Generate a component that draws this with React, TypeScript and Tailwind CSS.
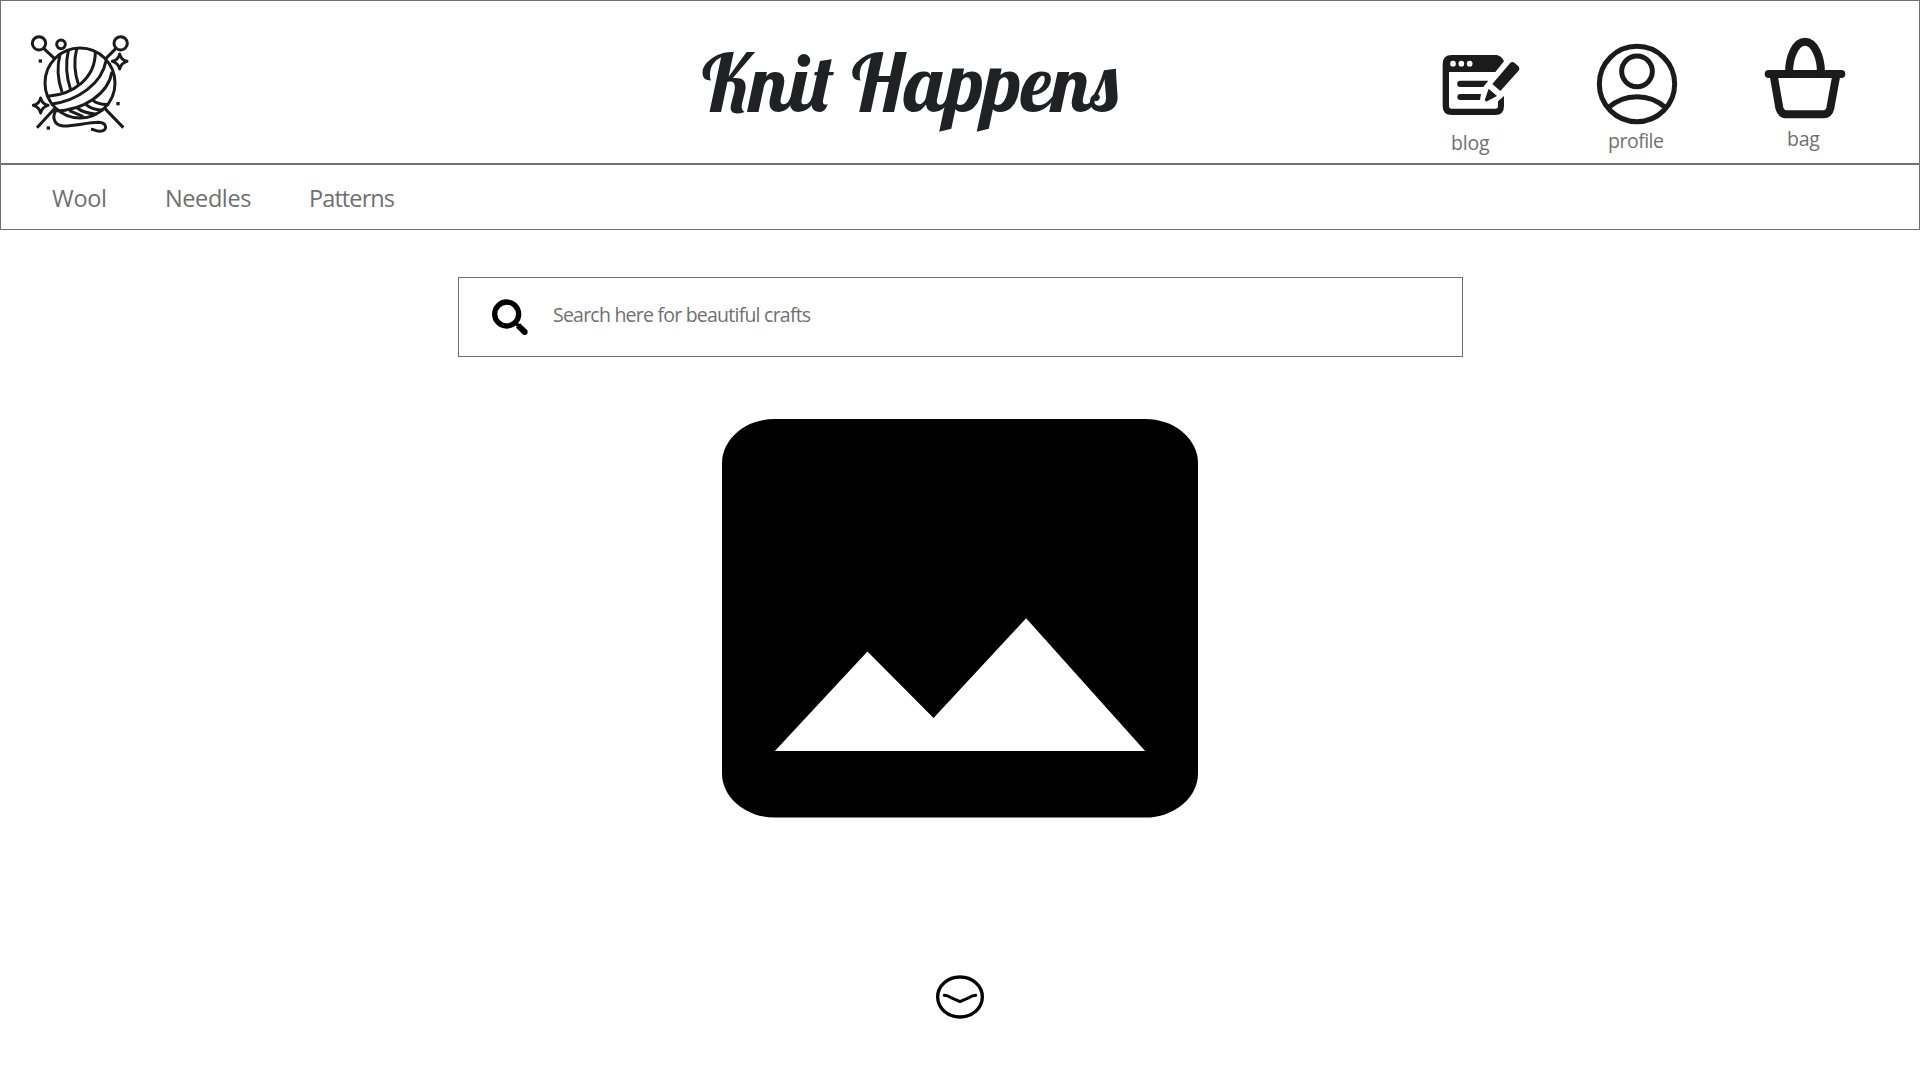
function YarnLogo() {
  return (
    <svg viewBox="0 0 360 345" className="mt-[24px] ml-[19px] h-[115px] w-[120px] shrink-0" fill="none" stroke="#1b1b1b" strokeWidth="9" strokeLinecap="butt" strokeLinejoin="round">
      <g transform="translate(0 1)">
        <circle cx="180" cy="173" r="105" />
        <circle cx="57" cy="54" r="20" />
        <circle cx="302" cy="54" r="20" />
        <circle cx="123" cy="57" r="13" />
        <path d="M71 69L103 99M288 69L255 102M106 247L51 307M252 247L310 307" />
        <path d="M120 87C110 125 114 165 126 200M145 76C136 115 139 155 152 193M170 71C160 110 164 145 176 180" />
        <path d="M84 213C160 206 226 160 226 80M92 237C175 226 246 174 258 106M107 256C190 256 265 205 276 139" />
        <path d="M112 250C95 268 98 300 130 302C160 303 200 292 235 291C262 292 264 317 240 318C230 318 224 313 213 312" />
        <path d="M148 256L190 274M172 248C188 262 210 265 230 267M198 238C214 252 232 254 250 255M219 225C232 236 252 238 268 237" />
        <path d="M299 86Q303 104 321 108Q303 113 299 131Q295 113 277 108Q295 104 299 86ZM62 218Q66 236 84 240Q66 245 62 263Q58 245 40 240Q58 236 62 218Z" />
      </g>
      <g fill="#1b1b1b" stroke="none">
        <rect x="56" y="103" width="10" height="10" />
        <rect x="289" y="231" width="10" height="10" />
        <rect x="80" y="304" width="10" height="10" />
      </g>
    </svg>
  );
}

function BlogIcon() {
  return (
    <svg viewBox="60 60 246 204" className="h-[68px] w-[82px]">
      <path fill="#1b1b1b" d="M95 75H226C238 75 248 83 252 94L226 126H87V228Q87 236 95 236H226Q234 236 234 228V214L252 198V228Q252 255 226 255H95Q68 255 68 228V102Q68 75 95 75Z" />
      <g fill="#fff">
        <circle cx="99" cy="101" r="8.500" />
        <circle cx="124" cy="101" r="8.500" />
        <circle cx="149" cy="101" r="8.500" />
      </g>
      <g fill="#1b1b1b">
        <path d="M121 152H205L190 171H121A9.500 9.500 0 0 1 121 152ZM121 192H183L180 210H121A9 9 0 0 1 121 192Z" />
        <path d="M270 100Q277 93 284 99L295 109Q301 116 295 123L241 183L217 162Z" />
        <path d="M206 176L231 198L201 214Q194 216 195 208Z" />
      </g>
    </svg>
  );
}

function ProfileIcon() {
  return (
    <svg viewBox="525 36 252 252" className="size-[84px]" fill="none" stroke="#1b1b1b" strokeWidth="15">
      <circle cx="651" cy="162" r="113" />
      <circle cx="651" cy="124" r="46" />
      <path d="M565 233C614 189 688 189 737 233" />
    </svg>
  );
}

function BagIcon() {
  return (
    <svg viewBox="219 48 252 252" className="size-[84px]" fill="none" stroke="#1b1b1b" strokeWidth="24" strokeLinecap="round">
      <path d="M236 162H454" />
      <path d="M297 158C297 112 316 65 345 65S393 112 393 158" />
      <path strokeLinecap="butt" d="M251 166L268 264Q273 283 291 283H400Q417 283 421 264L439 166" />
    </svg>
  );
}

function SearchIcon() {
  return (
    <svg viewBox="120 80 120 120" className="mt-[19px] ml-[31px] size-[40px] shrink-0" fill="none" stroke="#000">
      <circle cx="170" cy="131" r="36" strokeWidth="16" />
      <path d="M196 157L206 167" strokeWidth="10" />
      <path d="M204 165L223 184" strokeWidth="18" />
      <circle cx="224" cy="185" r="9" fill="#000" stroke="none" />
    </svg>
  );
}

function PhotoIcon() {
  return (
    <svg viewBox="3 3 18 18" preserveAspectRatio="none" className="mx-auto mt-[62px] h-[398.5px] w-[476px] overflow-visible">
      <rect x="3" y="3" width="18" height="18" rx="2" />
      <path fill="#fff" d="M8.500 13.500L11 16.500L14.500 12L19 18H5Z" />
    </svg>
  );
}

function ScrollDownIcon() {
  return (
    <svg viewBox="102 71 156 144" className="mx-auto mt-[155.5px] h-[48px] w-[52px]" fill="none" stroke="#000">
      <ellipse cx="180" cy="143" rx="67" ry="60" strokeWidth="10" />
      <path d="M133 138Q143 139 151 144L180 157L209 144Q217 139 227 138" strokeWidth="9" strokeLinecap="round" strokeLinejoin="round" />
    </svg>
  );
}

export default function App() {
  return (
    <div className="h-[1080px] w-[1920px] overflow-hidden bg-white font-['Open_Sans',sans-serif] text-[#707070]">
      <header className="flex h-[164px] items-start border border-[#707070]">
        <YarnLogo />
        <h1 className="mt-[31px] ml-[562px] h-[100px] w-[416px] shrink-0 font-['Lobster',cursive] text-[80px] leading-[100px] font-normal whitespace-nowrap text-[#202124]">
          Knit Happens
        </h1>
        <a className="mt-[49px] ml-[322px] flex w-[82px] flex-col">
          <BlogIcon />
          <span className="mt-[13px] ml-[11px] text-[19.5px] leading-[24px] tracking-[-0.2px]">blog</span>
        </a>
        <a className="mt-[41px] ml-[73px] flex w-[84px] flex-col">
          <ProfileIcon />
          <span className="mt-[3px] ml-[13px] text-[19.5px] leading-[24px] tracking-[-0.5px]">profile</span>
        </a>
        <a className="mt-[35px] ml-[84px] flex w-[84px] flex-col">
          <BagIcon />
          <span className="mt-[7px] ml-[24px] text-[19.5px] leading-[24px] tracking-[-0.2px]">bag</span>
        </a>
      </header>
      <nav className="flex h-[66px] items-start border border-[#707070] pt-[17px] pl-[51px] text-[23.5px] leading-[32px]">
        <a className="w-[113px] tracking-[-0.3px]">Wool</a>
        <a className="w-[144px] tracking-[-0.4px]">Needles</a>
        <a className="tracking-[-0.9px]">Patterns</a>
      </nav>
      <div className="mt-[47px] ml-[458px] flex h-[80px] w-[1005px] items-start border border-[#707070]">
        <SearchIcon />
        <span className="mt-[23px] ml-[23px] text-[19.5px] leading-[28px] tracking-[-0.77px]">Search here for beautiful crafts</span>
      </div>
      <PhotoIcon />
      <ScrollDownIcon />
    </div>
  );
}
